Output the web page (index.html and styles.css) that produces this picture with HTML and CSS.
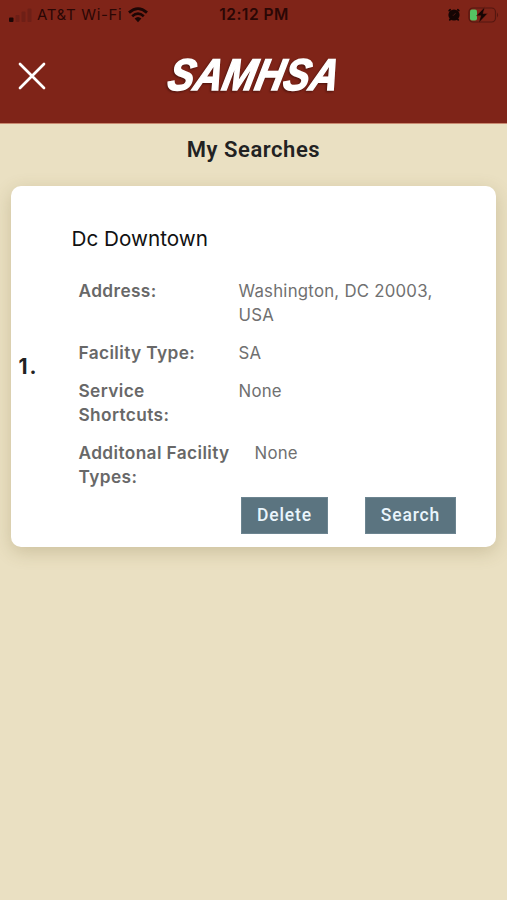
FILE: index.html
```html
<!DOCTYPE html>
<html lang="en">
<head>
    <meta charset="UTF-8">
    <meta name="viewport" content="width=device-width, initial-scale=1.0">
    <title>My Searches</title>
    <link rel="stylesheet" href="styles.css">
</head>
<body>

<header>
    <div class="status-bar">
        <div class="status-left">
            <svg class="signal" width="24" height="16" viewBox="0 0 24 16">
                <rect x="0" y="10.5" width="4.5" height="4.5" rx="1" fill="#1c0605"/>
                <rect x="6.5" y="8" width="4" height="7" rx="1" fill="#6e1f16"/>
                <rect x="12.5" y="4.5" width="4" height="10.5" rx="1" fill="#6e1f16"/>
                <rect x="18.5" y="1.5" width="4" height="13.5" rx="1" fill="#6e1f16"/>
            </svg>
            <span class="carrier">AT&amp;T Wi-Fi</span>
            <svg class="wifi" width="20" height="16" viewBox="0 0 20 16">
                <path d="M1 5.6 Q10 -2.4 19 5.6" fill="none" stroke="#1c0605" stroke-width="2.8"/>
                <path d="M4.2 9.2 Q10 4 15.8 9.2" fill="none" stroke="#1c0605" stroke-width="2.6"/>
                <path d="M6.6 11.6 Q10 8.6 13.4 11.6 L10 15.2 Z" fill="#1c0605"/>
            </svg>
        </div>
        <span class="time">12:12 PM</span>
        <div class="status-right">
            <svg width="14" height="14" viewBox="0 0 14 14">
                <circle cx="7" cy="7" r="5.6" fill="#150504"/>
                <path d="M2.2 2.6 L3.2 1.8 M11.8 2.6 L10.8 1.8 M3.4 11.2 L2.8 11.8 M10.6 11.2 L11.2 11.8" stroke="#150504" stroke-width="1.8" stroke-linecap="round"/>
                <path d="M8.6 5 L7 7.2 L5.6 7.2" fill="none" stroke="#4a1711" stroke-width="0.9"/>
            </svg>
            <svg width="31" height="18" viewBox="0 0 31 18">
                <rect x="1" y="2" width="26.5" height="14" rx="4" fill="none" stroke="#551710" stroke-width="1.2"/>
                <path d="M29 6.5 Q31.2 9 29 11.5 Z" fill="#551710"/>
                <rect x="2" y="3.6" width="7" height="11" rx="2" fill="#55c262"/>
                <path d="M17 0.8 L8.4 9.8 H12.8 L10.6 17 L19.6 7.6 H15 Z" fill="#150504" stroke="#7f2418" stroke-width="0.5"/>
            </svg>
        </div>
    </div>
    <div class="title-bar">
        <svg class="close" width="28" height="28" viewBox="0 0 28 28">
            <path d="M2 2 L26 26 M26 2 L2 26" stroke="#fff" stroke-width="2.7" stroke-linecap="round"/>
        </svg>
        <svg class="logo" width="200" height="60" viewBox="0 0 200 60">
            <text x="4" y="44.5" textLength="170" lengthAdjust="spacingAndGlyphs" transform="translate(8.5 0) skewX(-12)">SAMHSA</text>
        </svg>
    </div>
</header>

<h1>My Searches</h1>

<div class="search-card">
    <div class="number">1.</div>
    <div class="details">
        <h2>Dc Downtown</h2>
        <div class="row">
            <div class="label">Address:</div>
            <div class="value">Washington, DC 20003, USA</div>
        </div>
        <div class="row">
            <div class="label">Facility Type:</div>
            <div class="value">SA</div>
        </div>
        <div class="row">
            <div class="label">Service Shortcuts:</div>
            <div class="value">None</div>
        </div>
        <div class="row">
            <div class="label wide">Additonal Facility Types:</div>
            <div class="value">None</div>
        </div>
        <div class="buttons">
            <button class="delete-button">Delete</button>
            <button class="search-button">Search</button>
        </div>
    </div>
</div>

</body>
</html>
```
FILE: styles.css
```css
* {
    box-sizing: border-box;
}
body {
    font-family: Inter, "Liberation Sans", sans-serif;
    background-color: #eae0c2;
    color: #222;
    margin: 0;
    min-height: 900px;
}
header {
    background-color: #7f2418;
    height: 124px;
    border-bottom: 1px solid #c98a70;
}
.status-bar {
    display: grid;
    grid-template-columns: 1fr auto 1fr;
    align-items: center;
    height: 29px;
    padding: 0 8px 0 9px;
    color: #2a0705;
    font-size: 15px;
}
.status-left {
    display: flex;
    align-items: center;
}
.carrier {
    margin: 0 6px 0 4px;
    letter-spacing: 0.65px;
    white-space: nowrap;
}
.time {
    font-size: 15.5px;
    font-weight: 600;
    letter-spacing: 0.5px;
}
.status-right {
    display: flex;
    align-items: center;
    justify-content: flex-end;
    gap: 7px;
}
.title-bar {
    display: flex;
    align-items: center;
    height: 93px;
    padding-left: 18px;
}
.logo {
    margin-left: 117px;
    overflow: visible;
    filter: drop-shadow(-1px 1px 1px #4b120c);
}
.logo text {
    font-family: "Liberation Sans", sans-serif;
    font-size: 44.5px;
    font-weight: 700;
    font-style: italic;
    fill: #fff;
    stroke: #fff;
    stroke-width: 1.5px;
}
h1 {
    margin: 0;
    height: 61.5px;
    padding-top: 12px;
    font-family: Roboto, sans-serif;
    font-size: 22px;
    font-weight: 600;
    line-height: 28px;
    letter-spacing: 0.55px;
    text-align: center;
}
.search-card {
    display: flex;
    align-items: center;
    width: 485px;
    height: 361.5px;
    margin: 0 auto;
    background-color: #fff;
    border-radius: 10px;
    box-shadow: 0 5px 18px rgba(110, 90, 40, 0.24);
}
.number {
    width: 60.5px;
    padding-left: 7.5px;
    font-size: 21px;
    font-weight: 700;
    letter-spacing: 2px;
}
.details {
    flex: 1;
    align-self: stretch;
    padding: 39px 40px 0 0;
}
h2 {
    margin: 0 0 26.5px;
    color: #111;
    font-size: 20.7px;
    font-weight: 400;
    line-height: 28px;
}
.row {
    display: flex;
    margin: 0 0 14px 7px;
    color: #707070;
    font-size: 16.8px;
    line-height: 24px;
    letter-spacing: 0.24px;
}
.label {
    width: 160px;
    padding-right: 30px;
    color: #686868;
    font-size: 17.3px;
    font-weight: 600;
    letter-spacing: 0.38px;
}
.label.wide {
    width: 176px;
    padding-right: 20px;
}
.value {
    flex: 1;
}
.buttons {
    display: flex;
    justify-content: flex-end;
    gap: 37px;
    margin-top: -6.5px;
}
.buttons button {
    height: 37px;
    padding: 0;
    border: 1px solid #6c8490;
    background-color: #5b7480;
    color: #e9f5fc;
    font-family: Roboto, sans-serif;
    font-size: 17.5px;
    font-weight: 500;
    letter-spacing: 0.85px;
    cursor: pointer;
}
.delete-button {
    width: 87px;
}
.search-button {
    width: 91px;
}
```
